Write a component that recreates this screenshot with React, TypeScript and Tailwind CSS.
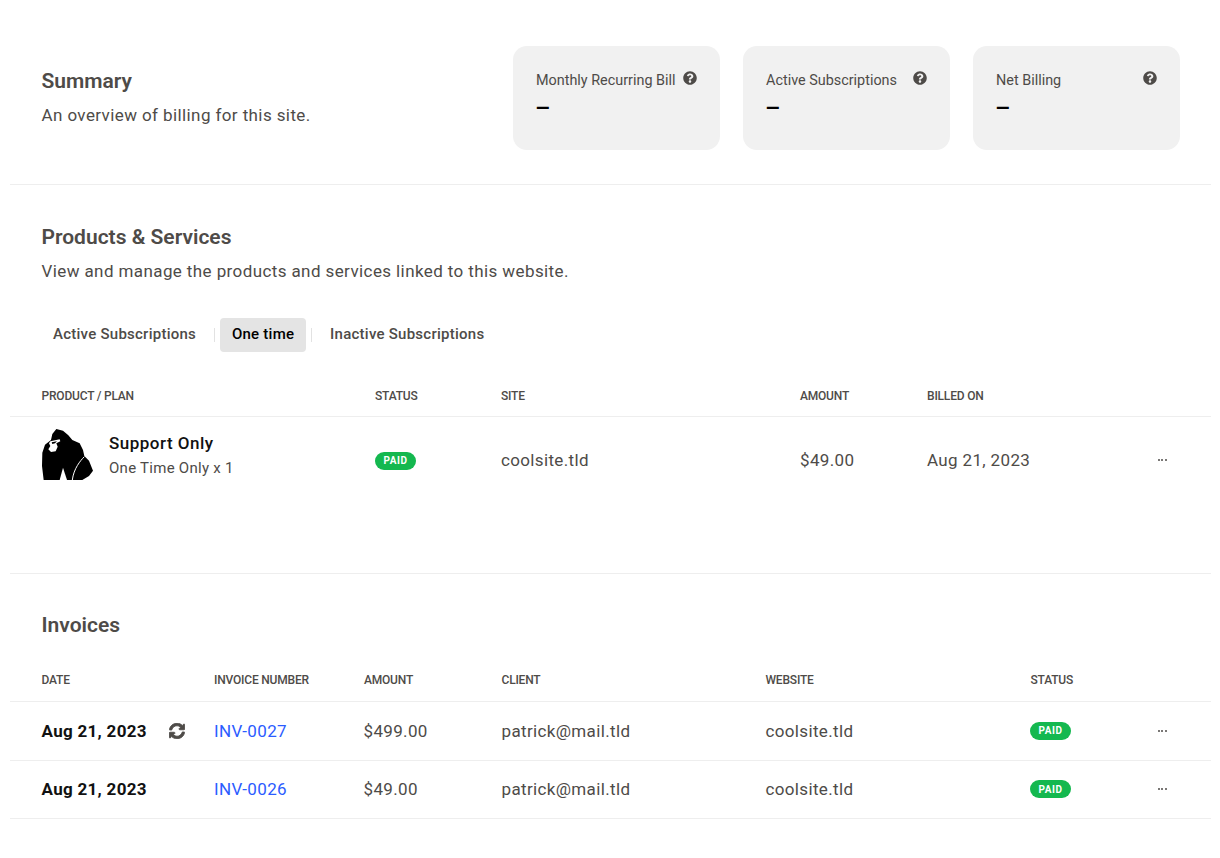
const font = { fontFamily: 'Roboto, sans-serif' }

const summaryCards = [
  { label: 'Monthly Recurring Bill' },
  { label: 'Active Subscriptions' },
  { label: 'Net Billing' },
]

const invoices = [
  { date: 'Aug 21, 2023', number: 'INV-0027', amount: '$499.00', recurring: true },
  { date: 'Aug 21, 2023', number: 'INV-0026', amount: '$49.00', recurring: false },
]

function HelpIcon() {
  return (
    <svg viewBox="0 0 512 512" className="h-[14px] w-[14px] shrink-0 fill-[#4e4b48]">
      <path d="M504 256c0 137-111 248-248 248S8 393 8 256 119 8 256 8s248 111 248 248zM262.700 90c-54.500 0-89.300 23-116.600 63.800-3.500 5.300-2.400 12.400 2.700 16.300l34.700 26.300c5.200 3.900 12.600 3 16.700-2.100 17.900-22.700 30.100-35.800 57.300-35.800 20.400 0 45.700 13.100 45.700 33 0 15-12.400 22.700-32.600 34-23.600 13.200-54.800 29.700-54.800 70.900V300c0 6.600 5.400 12 12 12h56c6.600 0 12-5.400 12-12v-1.300c0-28.600 83.500-29.800 83.500-107.200C379.300 133.200 318.800 90 262.700 90zM256 339c-25.500 0-46.200 20.700-46.200 46.200 0 25.500 20.700 46.200 46.200 46.200s46.200-20.700 46.200-46.200c0-25.500-20.700-46.200-46.200-46.200z" />
    </svg>
  )
}

function RecurringIcon() {
  return (
    <svg viewBox="0 0 512 512" className="h-4 w-4 fill-[#4e4b48] stroke-[#4e4b48] stroke-[28]">
      <path d="M370.720 133.280C339.458 104.008 298.888 87.962 255.848 88c-77.458.068-144.328 53.178-162.791 126.850-1.344 5.363-6.122 9.150-11.651 9.150H24.103c-7.498 0-13.194-6.807-11.807-14.176C33.933 94.924 134.813 8 256 8c66.448 0 126.791 26.136 171.315 68.685L463.030 40.970C478.149 25.851 504 36.559 504 57.941V192c0 13.255-10.745 24-24 24H345.941c-21.382 0-32.090-25.851-16.971-40.971l41.750-41.749zM32 296h134.059c21.382 0 32.090 25.851 16.971 40.971l-41.750 41.750c31.262 29.273 71.835 45.319 114.876 45.280 77.418-.070 144.315-53.144 162.787-126.849 1.344-5.363 6.122-9.150 11.651-9.150h57.304c7.498 0 13.194 6.807 11.807 14.176C478.067 417.076 377.187 504 256 504c-66.448 0-126.791-26.136-171.315-68.685L48.970 471.030C33.851 486.149 8 475.441 8 454.059V320c0-13.255 10.745-24 24-24z" />
    </svg>
  )
}

function Gorilla() {
  return (
    <svg viewBox="9 9 153 153" className="h-[51px] w-[51px] shrink-0">
      <path
        fill="#000"
        d="M52 9 L72 14 L88 28 L100 42 L122 52 L132 72 L136 90 L150 104 L162 134 L150 150 L130 162 L14 162 L9 120 L10 80 L18 56 L36 42 L40 24 Z"
      />
      <path fill="#fff" d="M34 46 L62 40 L64 46 L52 52 L56 62 L50 76 L36 78 L28 70 L34 60 L30 52 Z" />
      <path fill="#000" d="M38 49 L54 46 L48 52 L40 54 Z" />
      <path fill="none" stroke="#fff" strokeWidth="3" d="M136 92 C124 104 104 128 100 162" />
      <path fill="#fff" d="M62 162 L72 125 L84 162 Z" />
    </svg>
  )
}

function HeaderCell({ children }: { children?: React.ReactNode }) {
  return <div className="text-xs font-medium uppercase tracking-[-0.2px] text-[#4e4b48]">{children}</div>
}

function PaidBadge() {
  return (
    <span className="flex h-[18px] w-[41px] items-center justify-center rounded-full bg-[#14b84f] text-[10px] font-bold tracking-[0.5px] text-white">
      PAID
    </span>
  )
}

function Dots() {
  return (
    <div className="flex w-3 justify-center gap-[1.5px]">
      <span className="h-[2px] w-[2px] rounded-full bg-[#4e4b48]" />
      <span className="h-[2px] w-[2px] rounded-full bg-[#4e4b48]" />
      <span className="h-[2px] w-[2px] rounded-full bg-[#4e4b48]" />
    </div>
  )
}

export default function App() {
  return (
    <div className="ml-[10px] h-[858px] w-[1201px] bg-white text-[#4e4b48]" style={font}>
      <section className="flex h-[185px] items-start justify-between border-b border-[#eeeeee] pl-[31.5px] pr-[31px] pt-[46px]">
        <div className="pt-[21px]">
          <h2 className="text-[21px] leading-7 font-semibold">Summary</h2>
          <p className="mt-[5px] text-[17px] leading-[30px] tracking-[0.4px]">An overview of billing for this site.</p>
        </div>
        <div className="flex gap-[23px]">
          {summaryCards.map((card) => (
            <div key={card.label} className="h-[104px] w-[207px] rounded-[14px] bg-[#f1f1f1] px-[23px] pt-[25px]">
              <div className="flex items-start justify-between">
                <span className="text-[14.4px] leading-5">{card.label}</span>
                <HelpIcon />
              </div>
              <div className="mt-[3px] -ml-[1px] text-2xl leading-7 font-medium text-black">–</div>
            </div>
          ))}
        </div>
      </section>

      <section className="h-[389px] border-b border-[#eeeeee]">
        <div className="pl-[31.5px] pt-[38px]">
          <h2 className="text-[21px] leading-7 font-semibold">Products &amp; Services</h2>
          <p className="mt-[5px] text-[17px] leading-[30px] tracking-[0.4px]">View and manage the products and services linked to this website.</p>
        </div>

        <div className="mt-[32px] flex items-center pl-[32px] text-[15px] font-medium tracking-[0.25px]">
          <button className="h-8 px-[11px] pb-[2px]">Active Subscriptions</button>
          <span className="ml-[7px] h-[14px] w-px bg-[#e2e2e2]" />
          <button className="ml-[5px] h-[34px] w-[86px] rounded-[4px] bg-[#e4e4e4] pb-[2px] font-medium text-black">One time</button>
          <span className="ml-[5px] h-[14px] w-px bg-[#e2e2e2]" />
          <button className="ml-[6px] h-8 px-3 pb-[2px]">Inactive Subscriptions</button>
        </div>

        <div className="mt-[33px] grid h-[32px] grid-cols-[333.5px_126px_299px_127px_1fr] items-start border-b border-[#eeeeee] pl-[31.5px] pt-[3px]">
          <HeaderCell>Product / Plan</HeaderCell>
          <HeaderCell>Status</HeaderCell>
          <HeaderCell>Site</HeaderCell>
          <HeaderCell>Amount</HeaderCell>
          <HeaderCell>Billed On</HeaderCell>
        </div>

        <div className="grid grid-cols-[333.5px_126px_299px_127px_229px_1fr] items-center pl-[31.5px] pt-3 text-[17px] tracking-[0.35px]">
          <div className="flex items-center gap-[16.500px]">
            <Gorilla />
            <div>
              <div className="-mt-[1px] text-[17px] leading-6 font-medium tracking-[0.5px] text-[#111111]">Support Only</div>
              <div className="mt-[3px] text-[15px] leading-5 tracking-[0.27px]">One Time Only x 1</div>
            </div>
          </div>
          <div className="pt-3"><PaidBadge /></div>
          <div className="pt-3">coolsite.tld</div>
          <div className="pt-3">$49.00</div>
          <div className="pt-3">Aug 21, 2023</div>
          <div className="pt-[10px]"><Dots /></div>
        </div>
      </section>

      <section>
        <h2 className="pl-[31.5px] pt-[37px] text-[21px] leading-7 font-semibold">Invoices</h2>
        <div className="mt-[30px] grid h-[33px] grid-cols-[172.5px_150px_137.5px_264px_265px_1fr] items-start border-b border-[#eeeeee] pl-[31.5px] pt-[3px]">
          <HeaderCell>Date</HeaderCell>
          <HeaderCell>Invoice Number</HeaderCell>
          <HeaderCell>Amount</HeaderCell>
          <HeaderCell>Client</HeaderCell>
          <HeaderCell>Website</HeaderCell>
          <HeaderCell>Status</HeaderCell>
        </div>
        {invoices.map((invoice) => (
          <div key={invoice.number} className="grid h-[58.500px] grid-cols-[172.5px_149.500px_138px_264px_264.500px_126px_1fr] items-center border-b border-[#eeeeee] pl-[31.5px] text-[17px] tracking-[0.35px]">
            <div className="flex items-center">
              <span className={invoice.recurring ? 'w-[127px] pt-[1px] font-bold tracking-[0.3px] text-[#111111]' : 'w-[127px] font-bold tracking-[0.3px] text-[#111111]'}>{invoice.date}</span>
              {invoice.recurring ? <RecurringIcon /> : null}
            </div>
            <a className={invoice.recurring ? 'pt-[1px] text-[#2b5cff]' : 'text-[#2b5cff]'}>{invoice.number}</a>
            <div className={invoice.recurring ? 'pt-[1px]' : ''}>{invoice.amount}</div>
            <div className={invoice.recurring ? 'pt-[1px]' : ''}>patrick@mail.tld</div>
            <div className={invoice.recurring ? 'pt-[1px]' : ''}>coolsite.tld</div>
            <div><PaidBadge /></div>
            <Dots />
          </div>
        ))}
      </section>
    </div>
  )
}
